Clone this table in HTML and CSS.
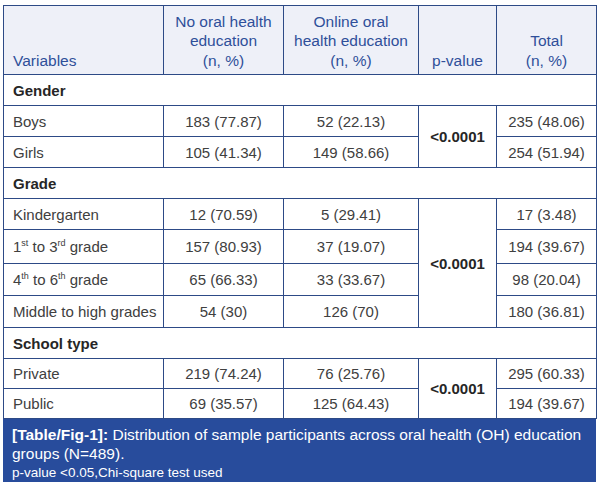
FILE: index.html
```html
<!DOCTYPE html>
<html>
<head>
<meta charset="utf-8">
<link rel="stylesheet" href="styles.css">
</head>
<body>
<div class="figure">
  <table class="data">
    <colgroup>
      <col class="c1"><col class="c2"><col class="c3"><col class="c4"><col class="c5">
    </colgroup>
    <thead>
      <tr class="head">
        <th class="left">Variables</th>
        <th>No oral health<br>education<br>(n, %)</th>
        <th>Online oral<br>health education<br>(n, %)</th>
        <th>p-value</th>
        <th>Total<br>(n, %)</th>
      </tr>
    </thead>
    <tbody>
      <tr class="sect"><td colspan="5">Gender</td></tr>
      <tr><td class="left">Boys</td><td>183 (77.87)</td><td>52 (22.13)</td><td class="p" rowspan="2">&lt;0.0001</td><td>235 (48.06)</td></tr>
      <tr><td class="left">Girls</td><td>105 (41.34)</td><td>149 (58.66)</td><td>254 (51.94)</td></tr>
      <tr class="sect"><td colspan="5">Grade</td></tr>
      <tr><td class="left">Kindergarten</td><td>12 (70.59)</td><td>5 (29.41)</td><td class="p" rowspan="4">&lt;0.0001</td><td>17 (3.48)</td></tr>
      <tr class="tall"><td class="left">1<sup>st</sup> to 3<sup>rd</sup> grade</td><td>157 (80.93)</td><td>37 (19.07)</td><td>194 (39.67)</td></tr>
      <tr class="mid"><td class="left">4<sup>th</sup> to 6<sup>th</sup> grade</td><td>65 (66.33)</td><td>33 (33.67)</td><td>98 (20.04)</td></tr>
      <tr class="mid"><td class="left">Middle to high grades</td><td>54 (30)</td><td>126 (70)</td><td>180 (36.81)</td></tr>
      <tr class="sect"><td colspan="5">School type</td></tr>
      <tr class="short"><td class="left">Private</td><td>219 (74.24)</td><td>76 (25.76)</td><td class="p" rowspan="2">&lt;0.0001</td><td>295 (60.33)</td></tr>
      <tr class="short"><td class="left">Public</td><td>69 (35.57)</td><td>125 (64.43)</td><td>194 (39.67)</td></tr>
    </tbody>
  </table>
  <div class="caption">
    <p class="title"><b>[Table/Fig-1]:</b> Distribution of sample participants across oral health (OH) education<br>groups (N=489).</p>
    <p class="note">p-value &lt;0.05,Chi-square test used</p>
  </div>
</div>
</body>
</html>
```
FILE: styles.css
```css
html, body {
  margin: 0;
  padding: 0;
  background: #ffffff;
}
body {
  font-family: "Liberation Sans", Arial, sans-serif;
}
.figure {
  width: 593px;
  padding: 5px 0 0 3px;
}
.data {
  width: 593px;
  border-collapse: collapse;
  table-layout: fixed;
  font-size: 15px;
  color: #404040;
}
.c1 { width: 160px; }
.c2 { width: 120px; }
.c3 { width: 135px; }
.c4 { width: 78px; }
.c5 { width: 100px; }
.data th, .data td {
  border: 1px solid #2d4a86;
  padding: 0 2px;
  text-align: center;
  vertical-align: middle;
  white-space: nowrap;
}
.data .left {
  text-align: left;
  padding-left: 9px;
}
.head {
  height: 69px;
  background: #eef0f8;
}
.head th {
  font-size: 15.5px;
  font-weight: normal;
  color: #2f4f9a;
  vertical-align: bottom;
  line-height: 19.5px;
  padding-bottom: 4px;
}
tbody tr {
  height: 31px;
}
tbody tr.tall { height: 34px; }
tbody tr.mid { height: 32px; }
tbody tr.short { height: 30px; }
.sect td {
  text-align: left;
  font-weight: bold;
  color: #262626;
  padding-left: 9px;
}
.p {
  font-weight: bold;
  color: #262626;
}
sup {
  font-size: 9px;
  vertical-align: 6px;
  line-height: 0;
}
.caption {
  background: #284c9c;
  color: #ffffff;
  height: 63px;
  box-sizing: border-box;
  padding: 7px 2px 0 9px;
}
.caption p {
  margin: 0;
}
.title {
  font-size: 15.5px;
  line-height: 18.5px;
  white-space: nowrap;
}
.note {
  font-size: 13.5px;
  line-height: 19px;
}
```
